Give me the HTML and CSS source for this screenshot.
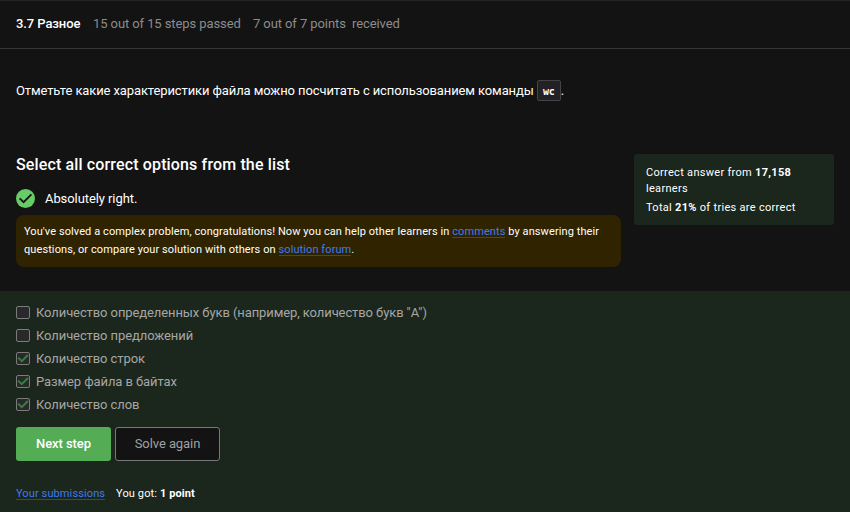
FILE: index.html
```html
<!DOCTYPE html>
<html lang="ru">
<head>
<meta charset="utf-8">
<title>3.7 Разное</title>
<link rel="stylesheet" href="styles.css">
</head>
<body>
<header class="topbar">
  <span class="lesson">3.7 Разное</span>
  <span class="steps">15 out of 15 steps passed</span>
  <span class="points">7 out of 7 points&nbsp; received</span>
</header>
<main>
  <p class="question">Отметьте какие характеристики файла можно посчитать с использованием команды <code>wc</code>.</p>
  <section class="result">
    <div class="feedback">
      <h1>Select all correct options from the list</h1>
      <div class="status">
        <svg width="19" height="19" viewBox="0 0 19 19"><circle cx="9.5" cy="9.5" r="9.5" fill="#66cc66"/><path d="M3.6 9.3 7.6 13.2 15.4 5.4" fill="none" stroke="#131313" stroke-width="1.8"/></svg>
        <span>Absolutely right.</span>
      </div>
      <div class="hint">You've solved a complex problem, congratulations! Now you can help other learners in <a>comments</a> by answering their<br>questions, or compare your solution with others on <a>solution forum</a>.</div>
    </div>
    <aside class="stats">
      <p>Correct answer from <b>17,158</b> learners</p>
      <p>Total <b>21%</b> of tries are correct</p>
    </aside>
  </section>
  <section class="answer">
    <ul class="options">
      <li><i class="box"></i><span>Количество определенных букв (например, количество букв "A")</span></li>
      <li><i class="box"></i><span>Количество предложений</span></li>
      <li><i class="box"><svg width="12" height="11" viewBox="0 0 12 11"><path d="M1.2 4.6 4.8 8.2 10.9 2" /></svg></i><span>Количество строк</span></li>
      <li><i class="box"><svg width="12" height="11" viewBox="0 0 12 11"><path d="M1.2 4.6 4.8 8.2 10.9 2" /></svg></i><span>Размер файла в байтах</span></li>
      <li><i class="box"><svg width="12" height="11" viewBox="0 0 12 11"><path d="M1.2 4.6 4.8 8.2 10.9 2" /></svg></i><span>Количество слов</span></li>
    </ul>
    <div class="actions">
      <button class="next">Next step</button>
      <button class="again">Solve again</button>
    </div>
    <footer class="meta"><span><a>Your submissions</a></span><span>You got: <b>1 point</b></span></footer>
  </section>
</main>
</body>
</html>
```
FILE: styles.css
```css
* { box-sizing: border-box; }
body {
  margin: 0;
  height: 512px;
  overflow: hidden;
  background: #131313;
  color: #fff;
  font: 13px/18px Roboto, "Noto Sans", sans-serif;
}
p, h1, ul { margin: 0; padding: 0; }
main { display: flex; flex-direction: column; height: 463px; }
.topbar {
  display: flex;
  height: 49px;
  padding-top: 14px;
  padding-left: 16px;
  border-top: 1px solid #242424;
  border-bottom: 1px solid #363636;
  color: #8c8c8c;
  letter-spacing: -0.09px;
  white-space: nowrap;
}
.lesson { width: 77px; color: #fff; font-weight: 500; }
.steps { width: 160px; }
.question {
  height: 105px;
  padding: 31px 16px 0;
  line-height: 21px;
  letter-spacing: -0.11px;
  white-space: nowrap;
}
code {
  display: inline-block;
  width: 24px;
  height: 21px;
  border: 1px solid #444;
  border-radius: 2px;
  background: #222226;
  font: bold 10px/21px "DejaVu Sans Mono", monospace;
  text-align: center;
}
.result {
  display: flex;
  justify-content: space-between;
  align-items: flex-start;
  height: 137px;
  padding: 0 16px;
}
.feedback { width: 605px; }
h1 { font-size: 16px; line-height: 21px; font-weight: 500; letter-spacing: 0.14px; }
.status { display: flex; align-items: center; gap: 10px; height: 19px; margin-top: 14px; letter-spacing: -0.08px; }
.hint {
  height: 52px;
  margin-top: 7px;
  padding: 8px 8px 0;
  border-radius: 8px;
  background: #302400;
  font-size: 11px;
  letter-spacing: 0.088px;
  white-space: nowrap;
}
a { color: #3f7bf0; box-shadow: inset 0 -1px #2b505c; }
.stats {
  width: 200px;
  height: 71px;
  padding: 11px 12px;
  border-radius: 3px;
  background: #1b261c;
  font-size: 11px;
  line-height: 16px;
  letter-spacing: 0.3px;
}
.stats p + p { margin-top: 3px; }
.answer { flex: 1; padding: 10px 16px 0; background: #1b261c; }
.options { list-style: none; color: #a6a6a6; letter-spacing: -0.095px; }
.options li { display: flex; align-items: center; gap: 6px; height: 23px; white-space: nowrap; }
.box {
  display: flex;
  width: 14px;
  height: 13px;
  border: 1px solid #7b7b7b;
  border-radius: 2px;
  background: #29292b;
}
.box path { fill: none; stroke: #37803b; stroke-width: 2; }
.actions { display: flex; gap: 4px; margin-top: 11px; }
button { height: 34px; padding: 0; border: 0; border-radius: 3px; font: 13px/18px Roboto, sans-serif; letter-spacing: -0.08px; }
.next { width: 95px; background: #54ad54; color: #fff; font-weight: 500; }
.again { width: 105px; border: 1px solid #777; background: #131313; color: #a0a0a0; }
.meta { display: flex; gap: 11px; margin-top: 26px; font-size: 11px; line-height: 13px; letter-spacing: 0.11px; }
```
